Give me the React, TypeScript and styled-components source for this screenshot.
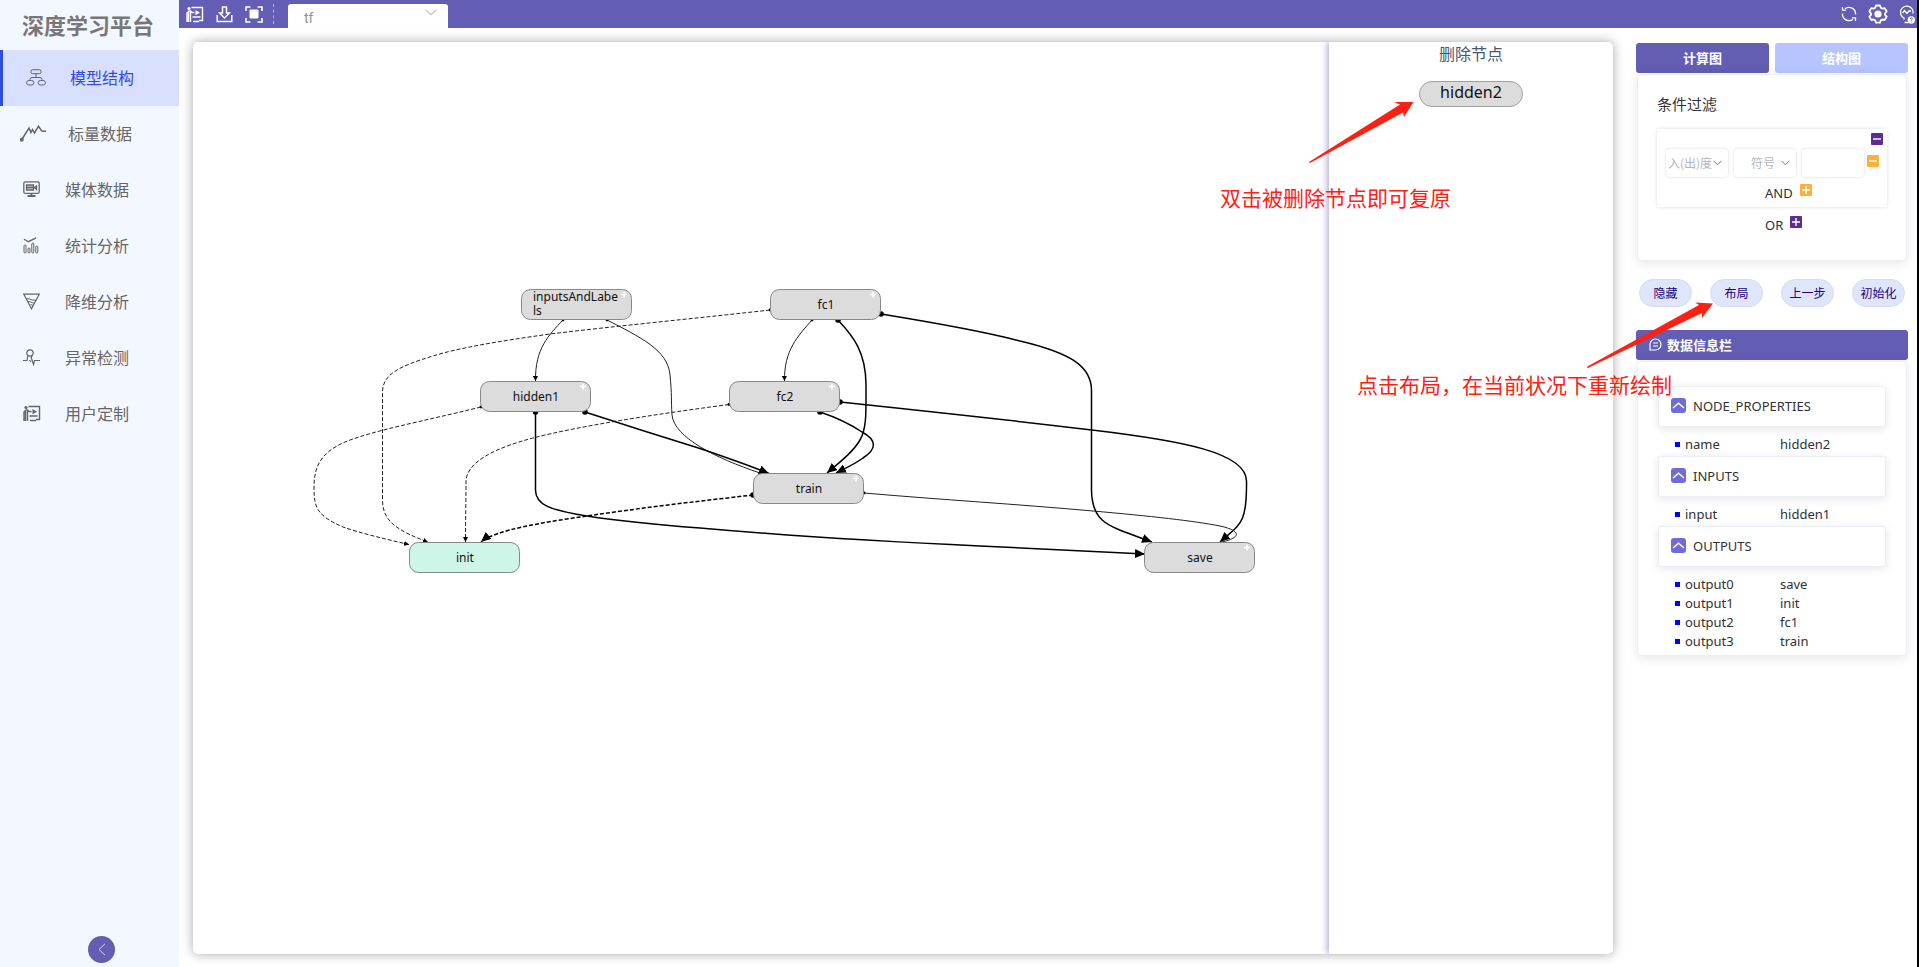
import React from "react";
import styled, { createGlobalStyle, css } from "styled-components";

const purple = "#635db3";
const latin = `"Noto Sans", "Noto Sans CJK SC", sans-serif`;
const cjk = `"Noto Sans CJK SC", "Noto Sans", sans-serif`;

const GlobalStyle = createGlobalStyle`
  *, *::before, *::after { box-sizing: border-box; }
  body { margin: 0; background: #fff; color: #303133; font-family: ${latin}; font-size: 13px; }
  button, input, select { font: inherit; color: inherit; margin: 0; }
  button { border: 0; background: none; padding: 0; cursor: pointer; }
  h1, h2, ul { margin: 0; padding: 0; }
  ul { list-style: none; }
`;

const Page = styled.div`
  position: relative;
  display: flex;
  min-height: 100vh;
  border-right: 2px solid #000;
`;

/* ---------- sidebar ---------- */

const Sidebar = styled.aside`
  flex: 0 0 179px;
  display: flex;
  flex-direction: column;
  background: #f3f7ff;
  font-family: ${cjk};
`;

const Brand = styled.h1`
  height: 50px;
  padding-left: 22px;
  font-size: 22px;
  line-height: 48px;
  font-weight: 700;
  color: #777;
`;

const NavLink = styled.a<{ $active?: boolean }>`
  display: flex;
  align-items: center;
  gap: 22px;
  height: 56px;
  padding: 0 0 2px 20px;
  font-size: 16px;
  line-height: 24px;
  font-weight: 400;
  color: #666;
  text-decoration: none;
  ${(p) =>
    p.$active &&
    css`
      border-left: 3px solid #2f4be0;
      background: #d9dfff;
      color: #2f4be0;
    `}
`;

const NavIcon = styled.span<{ $width: number }>`
  display: flex;
  justify-content: center;
  width: ${(p) => p.$width}px;
  color: #666;
`;

const SidebarFoot = styled.div`
  margin-top: auto;
  padding: 0 0 4px 88px;
`;

const CollapseButton = styled.button`
  display: grid;
  place-items: center;
  width: 27px;
  height: 27px;
  border-radius: 50%;
  background: ${purple};
`;

/* ---------- top bar ---------- */

const Main = styled.main`
  flex: 1;
  min-width: 0;
  display: flex;
  flex-direction: column;
`;

const TopBar = styled.header`
  display: flex;
  align-items: center;
  height: 28px;
  padding: 0 2px 0 7px;
  background: ${purple};
`;

const ToolGroup = styled.div<{ $gap: number }>`
  display: flex;
  align-items: center;
  gap: ${(p) => p.$gap}px;
`;

const ToolButton = styled.button`
  display: flex;
  color: #fff;
`;

const Divider = styled.span`
  height: 20px;
  margin: 0 14px 0 10px;
  border-left: 1px dashed #b9b6e0;
`;

const RunPicker = styled.label`
  display: grid;
  align-self: flex-end;
  width: 160px;
  height: 24px;
  margin-right: auto;
  border-radius: 3px 3px 0 0;
  background: #fff;

  > * { grid-area: 1 / 1; }
  > svg { justify-self: end; margin: 5px 11px 0 0; pointer-events: none; }
`;

const RunSelect = styled.select`
  appearance: none;
  width: 100%;
  height: 24px;
  padding: 4px 16px 0;
  border: 0;
  background: transparent;
  color: #909399;
  font-family: Roboto, sans-serif;
  font-size: 14px;
`;

/* ---------- workspace ---------- */

const Workspace = styled.div`
  flex: 1;
  display: flex;
  gap: 23px;
  padding: 14px 9px 13px 14px;
`;

const GraphCard = styled.section`
  flex: 1;
  min-width: 0;
  display: flex;
  border-radius: 5px;
  background: #fff;
  box-shadow: 0 0 12px rgba(0, 0, 0, 0.35);
`;

const GraphCanvas = styled.div`
  flex: 4;
  min-width: 0;
  display: flex;

  svg { flex: 1; min-width: 0; display: block; }
`;

const DeletedPanel = styled.div`
  flex: 1;
  display: flex;
  flex-direction: column;
  align-items: center;
  border-radius: 0 5px 5px 0;
  background: #fff;
  box-shadow: -2px 0 6px rgba(99, 93, 179, 0.5);
  clip-path: inset(0 0 0 -12px);
`;

const DeletedTitle = styled.h2`
  font-family: ${cjk};
  font-size: 16px;
  line-height: 22px;
  font-weight: 400;
  color: #46586a;
`;

const DeletedNode = styled.button`
  width: 104px;
  height: 26px;
  margin-top: 17px;
  padding-bottom: 3px;
  border: 1px solid #a0a0a0;
  border-radius: 13px;
  background: #dcdcdc;
  color: #111;
  font-size: 16px;
  line-height: 21px;
`;

const NodeLabel = styled.text`
  font-family: ${latin};
  font-size: 12px;
  fill: #111;
`;

/* ---------- right column ---------- */

const SideColumn = styled.aside`
  flex: 0 0 272px;
  display: flex;
  flex-direction: column;
  padding-top: 1px;
`;

const Tabs = styled.div`
  display: grid;
  grid-template-columns: 1fr 1fr;
  gap: 6px;
`;

const Tab = styled.button<{ $active?: boolean }>`
  height: 30px;
  padding-bottom: 2px;
  border-radius: 3px;
  background: ${(p) => (p.$active ? purple : "#b7c5ff")};
  color: #fff;
  font-family: ${cjk};
  font-size: 13px;
  font-weight: 700;
`;

const Card = styled.section`
  margin: 1px 1px 0;
  border: 1px solid #ebeef5;
  border-radius: 4px;
  background: #fff;
  box-shadow: 0 2px 12px rgba(0, 0, 0, 0.1);
`;

const FilterCard = styled(Card)`
  height: 187px;
  padding: 18px 19px 0;
`;

const FilterTitle = styled.h2`
  font-family: ${cjk};
  font-size: 15px;
  line-height: 22px;
  font-weight: 400;
  color: #333;
`;

const FilterGroup = styled.div`
  margin-top: 14px;
  height: 78px;
  padding: 4px 4px 0 9px;
  box-shadow: 0 0 4px rgba(0, 0, 0, 0.14);
`;

const GroupHead = styled.div`
  display: flex;
  justify-content: flex-end;
  height: 16px;
`;

const Condition = styled.div`
  display: flex;
  gap: 6px;
`;

const Field = styled.label`
  display: grid;
  flex: 0 0 62px;
  height: 28px;
  border-radius: 4px;
  background: #fff;
  box-shadow: 0 0 3px rgba(0, 0, 0, 0.16);

  > * { grid-area: 1 / 1; }
  > svg { place-self: center end; margin-right: 6px; pointer-events: none; }
`;

const FieldSelect = styled.select<{ $indent: number }>`
  appearance: none;
  width: 100%;
  height: 28px;
  padding: 0 0 2px ${(p) => p.$indent}px;
  border: 0;
  background: transparent;
  color: #b4b8c0;
  font-family: ${cjk};
  font-size: 12px;
`;

const FieldInput = styled.input`
  width: 100%;
  height: 28px;
  padding: 0 6px;
  border: 0;
  background: transparent;
  font-size: 12px;
`;

const SquareButton = styled.button<{ $tone: string }>`
  display: grid;
  place-items: center;
  width: 12px;
  height: 12px;
  border-radius: 1px;
  background: ${(p) => p.$tone};
`;

const RemoveSlot = styled.span`
  display: block;
  margin: 6px 0 0 -3px;
`;

const JoinRow = styled.div<{ $indent: number; $top: number }>`
  display: flex;
  align-items: flex-start;
  gap: 7px;
  padding: ${(p) => p.$top}px 0 0 ${(p) => p.$indent}px;
  line-height: 18px;
`;

const Actions = styled.div`
  display: flex;
  justify-content: space-between;
  margin: 18px 3px 0;
`;

const ActionButton = styled.button`
  width: 53px;
  height: 28px;
  padding-bottom: 2px;
  border: 1px solid #d7dcee;
  border-radius: 14px;
  background: #dfe6fb;
  color: #200080;
  font-family: ${cjk};
  font-size: 12px;
`;

const InfoHeader = styled.h2`
  display: flex;
  align-items: center;
  gap: 5px;
  height: 30px;
  margin-top: 23px;
  padding: 0 0 2px 13px;
  border-radius: 3px;
  background: ${purple};
  color: #fff;
  font-family: ${cjk};
  font-size: 13px;
  font-weight: 700;
`;

const InfoCard = styled(Card)`
  display: flex;
  flex-direction: column;
  gap: 2px;
  padding: 24px 20px 4px;
`;

const SectionToggle = styled.button`
  display: flex;
  align-items: center;
  gap: 7px;
  width: 100%;
  height: 41px;
  padding: 0 0 2px 12px;
  border: 1px solid #ebeef5;
  border-radius: 3px;
  background: #fff;
  box-shadow: 0 2px 10px rgba(0, 0, 0, 0.1);
  font-size: 13px;
`;

const PropertyList = styled.ul`
  padding: 8px 0 0 17px;
`;

const Property = styled.li`
  display: grid;
  grid-template-columns: 10px 95px 1fr;
  align-items: center;
  line-height: 19px;

  &::before {
    content: "";
    width: 5px;
    height: 5px;
    background: #00f;
  }
`;

const Notes = styled.svg`
  position: absolute;
  top: 0;
  right: 0;
  pointer-events: none;

  path { fill: #ff2014; }
  text { fill: #ff2014; font-family: ${cjk}; font-size: 21px; font-weight: 400; }
`;

/* ---------- icons ---------- */

const Line = ({ w = 18, h = 18, sw = 1, children }: { w?: number; h?: number; sw?: number; children: React.ReactNode }) => (
  <svg width={w} height={h} viewBox={`0 0 ${w} ${h}`} fill="none" stroke="currentColor" strokeWidth={sw} aria-hidden="true">
    {children}
  </svg>
);

const Chevron = ({ color, w = 9, h = 6 }: { color: string; w?: number; h?: number }) => (
  <svg width={w} height={h} viewBox="0 0 9 6" preserveAspectRatio="none" fill="none" stroke={color} aria-hidden="true">
    <path d="M.5 .8l4 4 4-4" />
  </svg>
);

const StructureIcon = () => (
  <Line w={20} h={17}>
    <rect x="5" y=".7" width="10" height="4" rx="1.6" />
    <path d="M10 4.700v3.800M4 11.500v-1q0-2 2-2h8q2 0 2 2v1" />
    <rect x=".7" y="11.500" width="7" height="4.500" rx="2" />
    <rect x="12.300" y="11.500" width="7" height="4.500" rx="2" />
  </Line>
);

const ScalarIcon = () => (
  <Line w={26} h={17} sw={1.5}>
    <path d="M1.800 14.500L9 3l2 4.500L12.500 4.500 14.500 8 18.500 1.200 21 5q.800 1.200 2.500 1.200H26" />
    <circle cx="1.800" cy="14.700" r="1.200" fill="currentColor" />
  </Line>
);

const MediaIcon = () => (
  <Line w={17} h={16} sw={1.3}>
    <rect x=".8" y=".8" width="15.400" height="11.600" rx="1.500" />
    <path d="M3.500 4h7v5h-7zM3.500 6.500h7M11.500 6.500l2-1.500v3.500z" fill="currentColor" fillOpacity=".35" />
    <path d="M8.500 12.500v2M4.500 15h8" strokeWidth="1.800" />
  </Line>
);

const StatsIcon = () => (
  <Line w={17} h={17}>
    <path d="M1 2.200l4.500 2.500L13 .8" strokeWidth="1.300" />
    <rect x="1" y="8" width="2" height="8" rx="1" />
    <rect x="5" y="11" width="2" height="5" rx="1" />
    <rect x="8.800" y="6" width="2" height="10" rx="1" />
    <rect x="12.800" y="9" width="2" height="7" rx="1" />
  </Line>
);

const ReduceIcon = () => (
  <Line w={17} h={17}>
    <path d="M.8 1.200h15.400L8.500 15.800z" strokeWidth="1.200" />
    <path d="M3.200 5.500l3.500.5 2.500 1 4 .2M5 8.500l2 .2 2.500 1.200 2 .1M7.500 11.500l3 1" />
  </Line>
);

const AnomalyIcon = () => (
  <Line w={17} h={17} sw={1.2}>
    <circle cx="7" cy="4" r="3.200" />
    <path d="M4.800 6.500L4 11.500H0M9 6.500l-1 3M6.500 11l1.500 2M8 8l2.500 7.500 1-4H17" />
  </Line>
);

const PresenterIcon = () => (
  <Line w={18} h={17} sw={1.4}>
    <circle cx="3" cy="2.500" r="1.600" fill="currentColor" stroke="none" />
    <path d="M1 16V7l2-2h1.500L6 6.500h2.500M2.500 5.500V16M4.500 6v10" />
    <path d="M5.500 1.500h11v13H13M6.500 11h8M7 15.500h6" />
    <path d="M9.500 4l4.500 2.800-4.500 2.500z" fill="currentColor" stroke="none" />
  </Line>
);

const DownloadIcon = () => (
  <Line w={17} h={17} sw={1.5}>
    <path d="M6.500 1h4v6h2.800L8.500 12 3.700 7h2.800z" />
    <path d="M1.200 9v6.500h14.600V9" />
  </Line>
);

const FitIcon = () => (
  <Line w={18} h={17} sw={1.6}>
    <path d="M1 5V1h4.500M12.500 1H17v4M17 12v4h-4.500M5.500 16H1v-4" />
    <rect x="4.500" y="3.500" width="9" height="9" rx="1" fill="currentColor" stroke="none" />
  </Line>
);

const RefreshIcon = () => (
  <Line w={16} h={16} sw={1.3}>
    <path d="M4 2.800A6.500 6.500 0 0 1 14.500 8.500M12 13.200A6.500 6.500 0 0 1 1.500 7.500" />
    <path d="M1.500 1v3.200h3.500M14.500 15v-3.200H11" />
  </Line>
);

const GearIcon = () => (
  <Line w={20} h={20} sw={1.8}>
    <path d="M8 1.500h4l.8 2.300 1.500.8 2.400-.5 2 3.400L17 9.300v1.500l1.700 1.800-2 3.400-2.400-.5-1.500.8-.8 2.300H8l-.8-2.300-1.500-.8-2.400.5-2-3.400L3 10.800V9.300L1.300 7.500l2-3.400 2.400.5 1.500-.8z" strokeLinejoin="round" />
    <circle cx="10" cy="10" r="3.600" fill="currentColor" stroke="none" />
  </Line>
);

const BulbIcon = () => (
  <Line w={16} h={19} sw={1.3}>
    <path d="M5 14.500v-1.500A6.300 6.300 0 1 1 14 8.500" />
    <path d="M3.500 8l2-2.500 2.500 3 2-2.500h2M5.500 17.500h4" />
    <circle cx="12.300" cy="15" r="3.700" fill="currentColor" stroke="none" />
    <path d="M11.200 14q.2-1.200 1.200-1.200t1 1q0 .6-1.100 1.300v.6M12.300 16.600v.8" stroke={purple} strokeWidth="1" />
  </Line>
);

const ChatIcon = () => (
  <Line w={13} h={13} sw={1.2}>
    <path d="M1 12V6.500a5.500 5.500 0 1 1 5.500 5.500zM4 5h5M4 8h5" />
  </Line>
);

const SignIcon = ({ plus }: { plus?: boolean }) => (
  <svg width="10" height="10" viewBox="0 0 10 10" stroke="#fff" strokeWidth="1.400" aria-hidden="true">
    <path d={plus ? "M1 5h8M5 1v8" : "M1 5h8"} />
  </svg>
);

const SectionIcon = () => (
  <svg width="15" height="15" viewBox="0 0 15 15" aria-hidden="true">
    <rect width="15" height="15" rx="3" fill="#706bd8" />
    <path d="M2 10l5.500-4.800L13 10" fill="none" stroke="#fff" strokeWidth="1.500" />
  </svg>
);

/* ---------- data ---------- */

const navItems = [
  { label: "模型结构", icon: <StructureIcon />, width: 25, active: true },
  { label: "标量数据", icon: <ScalarIcon />, width: 26 },
  { label: "媒体数据", icon: <MediaIcon />, width: 23 },
  { label: "统计分析", icon: <StatsIcon />, width: 23 },
  { label: "降维分析", icon: <ReduceIcon />, width: 23 },
  { label: "异常检测", icon: <AnomalyIcon />, width: 23 },
  { label: "用户定制", icon: <PresenterIcon />, width: 23 },
];

const nodes = [
  { x: 521, y: 289, lines: ["inputsAndLabe", "ls"], expandable: true },
  { x: 770, y: 289, lines: ["fc1"], expandable: true },
  { x: 480, y: 381, lines: ["hidden1"], expandable: true },
  { x: 729, y: 381, lines: ["fc2"], expandable: true },
  { x: 753, y: 473, lines: ["train"], expandable: true },
  { x: 409, y: 542, lines: ["init"], fill: "#cdf5e8" },
  { x: 1144, y: 542, lines: ["save"], expandable: true },
];

const edges: { d: string; bold?: boolean; dashed?: boolean; plain?: boolean }[] = [
  { d: "M563 320C549 335 535 348 535.500 381" },
  { d: "M607 320C640 337 668 350 670 375C672 395 671 400 672 415C674 437 715 458 760 473", plain: true },
  { d: "M481 407C420 422 375 430 345 442C320 453 314 467 314 488C314 509 318 516 343 527C360 533 385 539 409 544.500", dashed: true },
  { d: "M770 310C700 318 616 326 550 334C500 341 458 348 433 356C400 366 382.500 374 382.500 392V500C382.500 520 395 530 428 542", dashed: true },
  { d: "M729 404.500C650 415 580 426 533 438C495 448 466 462 466 482C466 500 465.500 520 465.500 542", dashed: true },
  { d: "M753 495C700 501 640 508 587 516C545 522 495 530 481 542", dashed: true, bold: true },
  { d: "M535.500 412V490C535.500 505 550 510 587 516C625 522 660 525 700 528C790 536 890 542 980 546L1145 554", bold: true },
  { d: "M585 412C625 425 660 436 700 448.500C725 457 748 465 769 473.500", bold: true },
  { d: "M812 320C798 336 784 350 784.500 381" },
  { d: "M838 320C853 336 866 352 866 385C866 410 867 428 860 440C853 452 840 462 827 473", bold: true },
  { d: "M820 412C835 417 850 424 862 432C877 440 877 449 863 458C855 464 846 468 836 473", bold: true },
  { d: "M881 314C930 322 990 333 1020 341C1075 354 1091 368 1091.500 390V490C1092 525 1110 526 1152 542", bold: true },
  { d: "M840 402C925 411 1010 420 1092 430C1185 441 1246 453 1246.500 481C1247 525 1240 524 1220 542", bold: true },
  { d: "M864 493C945 500 1015 504 1093 511C1150 516 1195 521 1220 526C1243 531 1240 538 1222 542", plain: true },
];

const sections = [
  { title: "NODE_PROPERTIES", rows: [["name", "hidden2"]] },
  { title: "INPUTS", rows: [["input", "hidden1"]] },
  {
    title: "OUTPUTS",
    rows: [["output0", "save"], ["output1", "init"], ["output2", "fc1"], ["output3", "train"]],
  },
];

const ComputeGraph = () => (
  <svg viewBox="193 42 1136 912" role="img" aria-label="计算图">
    <defs>
      <marker id="head" viewBox="0 0 10 9" refX="10" refY="4.500" markerWidth="10" markerHeight="9" markerUnits="userSpaceOnUse" orient="auto">
        <path d="M0 0L10 4.500L0 9z" />
      </marker>
      <marker id="headThin" viewBox="0 0 5 5" refX="5" refY="2.500" markerWidth="5" markerHeight="5" markerUnits="userSpaceOnUse" orient="auto">
        <path d="M0 0L5 2.500L0 5z" />
      </marker>
      <marker id="dot" viewBox="0 0 6 6" refX="3" refY="3" markerWidth="6" markerHeight="6" markerUnits="userSpaceOnUse">
        <circle cx="3" cy="3" r="2.800" />
      </marker>
      <marker id="dotThin" viewBox="0 0 4 4" refX="2" refY="2" markerWidth="4" markerHeight="4" markerUnits="userSpaceOnUse">
        <circle cx="2" cy="2" r="1.400" />
      </marker>
    </defs>
    {edges.map((e) => (
      <path
        key={e.d}
        d={e.d}
        fill="none"
        stroke={e.bold ? "#000" : "#222"}
        strokeWidth={e.bold ? 1.5 : 1}
        strokeDasharray={e.dashed ? "4 2" : undefined}
        markerStart={e.bold ? "url(#dot)" : "url(#dotThin)"}
        markerEnd={e.bold ? "url(#head)" : e.plain ? undefined : "url(#headThin)"}
      />
    ))}
    {nodes.map((n) => (
      <g key={n.lines[0]}>
        <rect x={n.x + 0.5} y={n.y + 0.5} width="110" height="30" rx="9" fill={n.fill ?? "#dcdcdc"} stroke="#888" />
        {n.lines.length > 1 ? (
          n.lines.map((line, i) => (
            <NodeLabel key={line} x={n.x + 12} y={n.y + 12 + i * 14}>{line}</NodeLabel>
          ))
        ) : (
          <NodeLabel x={n.x + 56} y={n.y + 20} textAnchor="middle">{n.lines[0]}</NodeLabel>
        )}
        {n.expandable && <path d={`M${n.x + 100} ${n.y + 5.5}h6m-3 -3v6`} stroke="#fff" strokeWidth="1.500" />}
      </g>
    ))}
  </svg>
);

export default function App() {
  return (
    <Page>
      <GlobalStyle />
      <Sidebar>
        <Brand>深度学习平台</Brand>
        <nav>
          {navItems.map((item) => (
            <NavLink key={item.label} href="#" $active={item.active}>
              <NavIcon $width={item.width}>{item.icon}</NavIcon>
              {item.label}
            </NavLink>
          ))}
        </nav>
        <SidebarFoot>
          <CollapseButton aria-label="收起">
            <svg width="8" height="13" viewBox="0 0 8 13" fill="none" stroke="#d5d2f0" aria-hidden="true">
              <path d="M7 .8L1 6.500l6 5.700" />
            </svg>
          </CollapseButton>
        </SidebarFoot>
      </Sidebar>

      <Main>
        <TopBar>
          <ToolGroup $gap={12}>
            <ToolButton aria-label="用户定制"><PresenterIcon /></ToolButton>
            <ToolButton aria-label="下载"><DownloadIcon /></ToolButton>
            <ToolButton aria-label="适应画布"><FitIcon /></ToolButton>
          </ToolGroup>
          <Divider />
          <RunPicker>
            <RunSelect aria-label="数据"><option>tf</option></RunSelect>
            <Chevron color="#c0c4cc" w={12} h={7} />
          </RunPicker>
          <ToolGroup $gap={11}>
            <ToolButton aria-label="刷新"><RefreshIcon /></ToolButton>
            <ToolButton aria-label="设置"><GearIcon /></ToolButton>
            <ToolButton aria-label="帮助"><BulbIcon /></ToolButton>
          </ToolGroup>
        </TopBar>

        <Workspace>
          <GraphCard>
            <GraphCanvas><ComputeGraph /></GraphCanvas>
            <DeletedPanel>
              <DeletedTitle>删除节点</DeletedTitle>
              <DeletedNode>hidden2</DeletedNode>
            </DeletedPanel>
          </GraphCard>

          <SideColumn>
            <Tabs>
              <Tab $active>计算图</Tab>
              <Tab>结构图</Tab>
            </Tabs>
            <FilterCard>
              <FilterTitle>条件过滤</FilterTitle>
              <FilterGroup>
                <GroupHead>
                  <SquareButton $tone="#5c2d91" aria-label="删除条件组"><SignIcon /></SquareButton>
                </GroupHead>
                <Condition>
                  <Field>
                    <FieldSelect $indent={2} aria-label="度"><option>入(出)度</option></FieldSelect>
                    <Chevron color="#7a6aa8" />
                  </Field>
                  <Field>
                    <FieldSelect $indent={17} aria-label="符号"><option>符号</option></FieldSelect>
                    <Chevron color="#7a6aa8" />
                  </Field>
                  <Field><FieldInput aria-label="数值" /></Field>
                  <RemoveSlot>
                    <SquareButton $tone="#fbb03b" aria-label="删除条件"><SignIcon /></SquareButton>
                  </RemoveSlot>
                </Condition>
                <JoinRow $indent={99} $top={7}>
                  AND
                  <SquareButton $tone="#fbb03b" aria-label="添加 AND 条件"><SignIcon plus /></SquareButton>
                </JoinRow>
              </FilterGroup>
              <JoinRow $indent={108} $top={9}>
                OR
                <SquareButton $tone="#5c2d91" aria-label="添加 OR 条件"><SignIcon plus /></SquareButton>
              </JoinRow>
            </FilterCard>

            <Actions>
              <ActionButton>隐藏</ActionButton>
              <ActionButton>布局</ActionButton>
              <ActionButton>上一步</ActionButton>
              <ActionButton>初始化</ActionButton>
            </Actions>

            <InfoHeader><ChatIcon />数据信息栏</InfoHeader>
            <InfoCard>
              {sections.map((s) => (
                <div key={s.title}>
                  <SectionToggle aria-expanded="true"><SectionIcon />{s.title}</SectionToggle>
                  <PropertyList>
                    {s.rows.map(([name, value]) => (
                      <Property key={name}><span>{name}</span><span>{value}</span></Property>
                    ))}
                  </PropertyList>
                </div>
              ))}
            </InfoCard>
          </SideColumn>
        </Workspace>
      </Main>

      <Notes width="717" height="420" viewBox="1200 0 717 420">
        <path d="M1309 162L1400 104.500L1394 102L1413.500 102L1404 117L1403 112.500L1310 163z" />
        <text x="1220" y="206">双击被删除节点即可复原</text>
        <path d="M1586.500 367L1699 305L1695 302.500L1713 303.500L1702 318L1702 313L1588 368z" />
        <text x="1357" y="393">点击布局，在当前状况下重新绘制</text>
      </Notes>
    </Page>
  );
}
